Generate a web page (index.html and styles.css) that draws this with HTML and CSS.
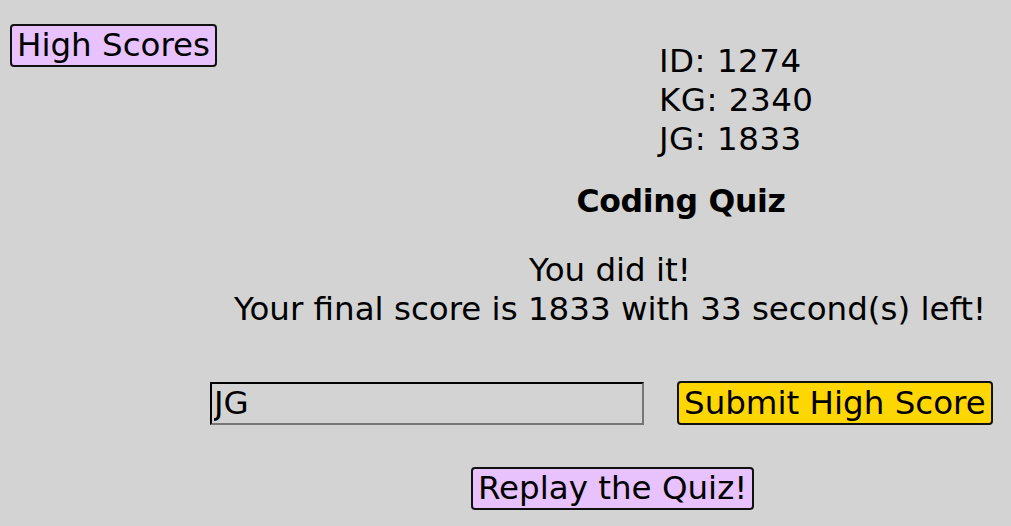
FILE: index.html
```html
<!DOCTYPE html>
<html>
<head>
<meta charset="utf-8">
<link rel="stylesheet" href="styles.css">
</head>
<body>
<div class="top">
  <button class="btn btn-purple btn-high">High Scores</button>
  <ul class="scores">
    <li>ID: 1274</li>
    <li>KG: 2340</li>
    <li>JG: 1833</li>
  </ul>
</div>
<h1 class="title">Coding Quiz</h1>
<div class="message">
  <div class="did">You did it!</div>
  <div class="final">Your final score is 1833 with 33 second(s) left!</div>
</div>
<form class="entry">
  <input class="initials" type="text" value="JG">
  <button type="button" class="btn btn-yellow btn-submit">Submit High Score</button>
</form>
<div class="replay-row">
  <button class="btn btn-purple btn-replay">Replay the Quiz!</button>
</div>
</body>
</html>
```
FILE: styles.css
```css
html, body {
  margin: 0;
  padding: 0;
  background: #d3d3d3;
}
body {
  font-family: "DejaVu Sans", Verdana, sans-serif;
  font-size: 32.5px;
  color: #000;
  width: 1011px;
}
.top {
  display: flex;
  align-items: flex-start;
  padding: 24px 0 0 10px;
}
.btn {
  font-family: inherit;
  font-size: 32.5px;
  line-height: 38px;
  padding: 0 5px;
  border: 2px solid #111;
  border-radius: 4px;
  color: #000;
  margin: 0;
}
.btn-purple {
  background: #e8c2fc;
}
.btn-yellow {
  background: #ffd700;
}
.btn-high {
  line-height: 39px;
}
.btn-submit {
  line-height: 40px;
}
.btn-replay {
  line-height: 39px;
}
.scores {
  list-style: none;
  margin: 18px 0 0 442px;
  padding: 0;
  line-height: 39px;
  letter-spacing: 0.5px;
}
.title {
  margin: 25px 0 0 351px;
  text-align: center;
  font-size: 31.5px;
  line-height: 34px;
  font-weight: bold;
  letter-spacing: -0.3px;
}
.message {
  margin: 33px 0 0 209px;
  text-align: center;
  line-height: 39px;
}
.entry {
  display: flex;
  align-items: center;
  gap: 33px;
  margin: 52px 0 0 210px;
}
.initials {
  width: 434px;
  height: 43px;
  box-sizing: border-box;
  margin: 0;
  padding: 0 2px;
  font-family: inherit;
  font-size: 32.5px;
  background: transparent;
  border: 2px inset #767676;
  border-top-color: #222;
  border-left-color: #222;
  color: #000;
}
.replay-row {
  margin: 42px 0 0 471px;
}
```
